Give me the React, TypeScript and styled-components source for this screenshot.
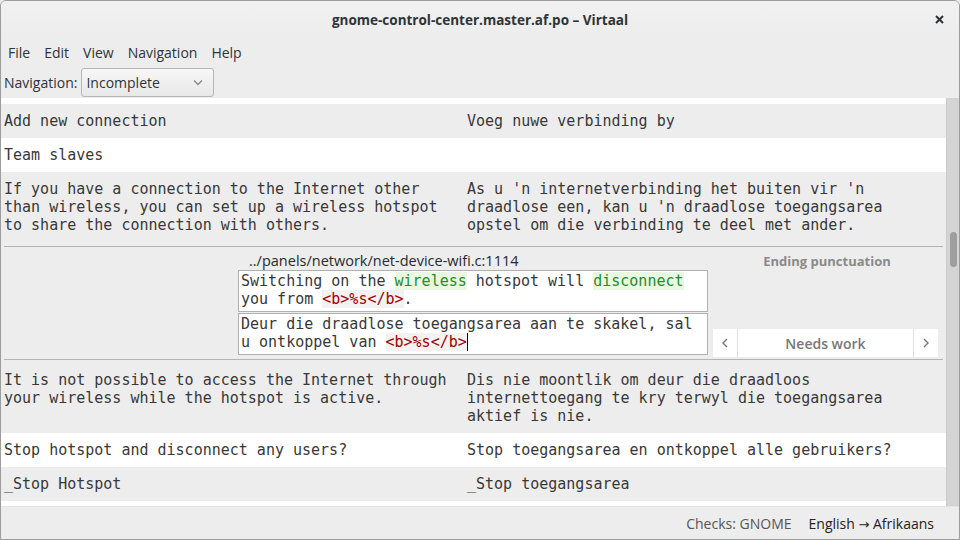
import React from "react";
import styled, { createGlobalStyle } from "styled-components";

const GlobalStyle = createGlobalStyle`
  html, body { margin: 0; padding: 0; width: 960px; height: 540px; overflow: hidden; background: #ededed; }
  * { box-sizing: border-box; }
`;

const UI = `"Open Sans", "Noto Sans", sans-serif`;
const MONO = `"DejaVu Sans Mono", "Liberation Mono", monospace`;

const Window = styled.div`
  width: 960px;
  height: 540px;
  display: flex;
  flex-direction: column;
  background: #ededed;
  border: 1px solid #9c9c9c;
  border-radius: 6px 6px 0 0;
  overflow: hidden;
  font-family: ${UI};
  color: #2e3436;
`;

const TitleBar = styled.div`
  height: 37px;
  flex: none;
  display: grid;
  grid-template-columns: 1fr auto 1fr;
  align-items: center;
  background: linear-gradient(#f1f1f1, #ededed);
`;

const Title = styled.div`
  grid-column: 2;
  font-size: 13.5px;
  font-weight: 700;
  color: #2e3436;
`;

const CloseButton = styled.div`
  grid-column: 3;
  justify-self: end;
  margin-right: 15px;
  display: flex;
  align-items: center;
`;

const MenuBar = styled.div`
  height: 28px;
  flex: none;
  display: flex;
  align-items: center;
  padding-left: 7px;
  font-size: 14px;
`;

const MenuItem = styled.span`
  margin-right: 14px;
`;

const ToolBar = styled.div`
  height: 32px;
  flex: none;
  display: flex;
  align-items: flex-start;
  padding: 2px 0 0 3px;
  gap: 4px;
  font-size: 14px;
`;

const ToolLabel = styled.span`
  line-height: 29px;
`;

const Combo = styled.div`
  width: 133px;
  height: 29px;
  border: 1px solid #b6b6b6;
  border-radius: 3px;
  background: linear-gradient(#f7f7f7, #e8e8e8);
  display: flex;
  align-items: center;
  justify-content: space-between;
  padding: 0 10px 0 4px;
  font-size: 14px;
`;

const ListArea = styled.div`
  height: 408px;
  flex: none;
  display: flex;
`;

const List = styled.div`
  flex: 1;
  background: #ededed;
  overflow: hidden;
  display: flex;
  flex-direction: column;
`;

const Row = styled.div<{ $alt: boolean; $pt?: number; $pb?: number }>`
  display: grid;
  grid-template-columns: 463px 1fr;
  background: ${(p) => (p.$alt ? "#ededed" : "#ffffff")};
  padding-top: ${(p) => p.$pt ?? 8}px;
  padding-bottom: ${(p) => p.$pb ?? 8}px;
  flex: none;
`;

const PartialRow = styled.div<{ $h: number }>`
  height: ${(p) => p.$h}px;
  background: #ffffff;
  flex: none;
`;

const Cell = styled.div`
  padding: 0 3px;
  font-family: ${MONO};
  font-size: 15px;
  line-height: 18px;
  white-space: pre;
  color: #383838;
`;

const EditBlock = styled.div`
  margin: 0 3px;
  border-top: 1px solid #b4b4b4;
  border-bottom: 1px solid #b4b4b4;
  padding: 6px 2px 2px 0;
  display: grid;
  grid-template-columns: 234px 470px 5px 228px;
  flex: none;
`;

const Main = styled.div`
  grid-column: 2;
  display: flex;
  flex-direction: column;
  gap: 1px;
  padding-bottom: 2px;
`;

const PathLabel = styled.div`
  height: 16px;
  line-height: 16px;
  padding-left: 11px;
  font-size: 14.5px;
  font-weight: 500;
  color: #2a2a2a;
`;

const TextBox = styled.div`
  height: 42px;
  background: #ffffff;
  border: 1px solid #b0b0b0;
  padding: 1px 3px 3px 2px;
  font-family: ${MONO};
  font-size: 15px;
  line-height: 18px;
  white-space: pre;
  color: #383838;
`;

const Hl = styled.span`
  color: #2a8a2a;
  background: #e8f8e2;
`;

const Tag = styled.span`
  color: #a40000;
  background: #f2f2f2;
`;

const Caret = styled.span`
  display: inline-block;
  width: 0;
  height: 18px;
  vertical-align: top;
  border-left: 1px solid #000;
`;

const Side = styled.div`
  grid-column: 4;
  display: flex;
  flex-direction: column;
`;

const SideTitle = styled.div`
  height: 16px;
  line-height: 16px;
  text-align: center;
  font-size: 13px;
  font-weight: 700;
  color: #8a8a8a;
`;

const StatusNav = styled.div`
  margin-top: auto;
  height: 28px;
  width: 225px;
  background: #ffffff;
  display: grid;
  grid-template-columns: 25px 1fr 25px;
`;

const NavCell = styled.div<{ $sep?: "left" | "right" }>`
  display: flex;
  align-items: center;
  justify-content: center;
  font-size: 14px;
  font-weight: 600;
  color: #777;
  ${(p) => (p.$sep === "left" ? "border-right: 1px solid #e0e0e0;" : "")}
  ${(p) => (p.$sep === "right" ? "border-left: 1px solid #e0e0e0;" : "")}
`;

const Scrollbar = styled.div`
  width: 13px;
  flex: none;
  background: #d4d4d4;
  border-left: 1px solid #cbcbcb;
  display: flex;
  justify-content: center;
`;

const Thumb = styled.div<{ $top: number; $h: number }>`
  width: 7px;
  margin-top: ${(p) => p.$top}px;
  height: ${(p) => p.$h}px;
  border-radius: 4px;
  background: #9e9e9e;
`;

const StatusBar = styled.div`
  flex: 1;
  display: flex;
  align-items: center;
  justify-content: flex-end;
  gap: 17px;
  padding-right: 25px;
  font-size: 14px;
  border-top: 1px solid #e4e4e4;
`;

const Checks = styled.span`
  color: #555;
`;

const Lang = styled.span`
  color: #222;
`;

const Arrow = styled.span`
  font-family: "DejaVu Sans", sans-serif;
  font-size: 13px;
`;

const Chevron = ({ dir, color = "#777" }: { dir: "down" | "left" | "right"; color?: string }) => {
  const d =
    dir === "down" ? "M1 1.5 L5 5.5 L9 1.5" : dir === "left" ? "M5 1 L1 5 L5 9" : "M1 1 L5 5 L1 9";
  const w = dir === "down" ? 10 : 6;
  const h = dir === "down" ? 7 : 10;
  return (
    <svg width={w} height={h} viewBox={`0 0 ${w} ${h}`}>
      <path d={d} fill="none" stroke={color} strokeWidth="1.4" />
    </svg>
  );
};

export default function App() {
  return (
    <>
      <GlobalStyle />
      <Window>
        <TitleBar>
          <Title>gnome-control-center.master.af.po – Virtaal</Title>
          <CloseButton>
            <svg width="9" height="9" viewBox="0 0 9 9">
              <path d="M1 1 L8 8 M8 1 L1 8" stroke="#2e3436" strokeWidth="2" />
            </svg>
          </CloseButton>
        </TitleBar>
        <MenuBar>
          <MenuItem>File</MenuItem>
          <MenuItem>Edit</MenuItem>
          <MenuItem>View</MenuItem>
          <MenuItem>Navigation</MenuItem>
          <MenuItem>Help</MenuItem>
        </MenuBar>
        <ToolBar>
          <ToolLabel>Navigation:</ToolLabel>
          <Combo>
            <span>Incomplete</span>
            <Chevron dir="down" color="#8a8a8a" />
          </Combo>
        </ToolBar>
        <ListArea>
          <List>
            <PartialRow $h={6} />
            <Row $alt>
              <Cell>Add new connection</Cell>
              <Cell>Voeg nuwe verbinding by</Cell>
            </Row>
            <Row $alt={false}>
              <Cell>Team slaves</Cell>
              <Cell></Cell>
            </Row>
            <Row $alt $pb={12}>
              <Cell>{"If you have a connection to the Internet other\nthan wireless, you can set up a wireless hotspot\nto share the connection with others."}</Cell>
              <Cell>{"As u 'n internetverbinding het buiten vir 'n\ndraadlose een, kan u 'n draadlose toegangsarea\nopstel om die verbinding te deel met ander."}</Cell>
            </Row>
            <EditBlock>
              <Main>
                <PathLabel>../panels/network/net-device-wifi.c:1114</PathLabel>
                <TextBox>
                  Switching on the <Hl>wireless</Hl> hotspot will <Hl>disconnect</Hl>
                  {"\n"}you from <Tag>&lt;b&gt;%s&lt;/b&gt;</Tag>.
                </TextBox>
                <TextBox>
                  {"Deur die draadlose toegangsarea aan te skakel, sal\nu ontkoppel van "}
                  <Tag>&lt;b&gt;%s&lt;/b&gt;</Tag>
                  <Caret />
                </TextBox>
              </Main>
              <Side>
                <SideTitle>Ending punctuation</SideTitle>
                <StatusNav>
                  <NavCell $sep="left">
                    <Chevron dir="left" />
                  </NavCell>
                  <NavCell>Needs work</NavCell>
                  <NavCell $sep="right">
                    <Chevron dir="right" />
                  </NavCell>
                </StatusNav>
              </Side>
            </EditBlock>
            <Row $alt $pt={11}>
              <Cell>{"It is not possible to access the Internet through\nyour wireless while the hotspot is active."}</Cell>
              <Cell>{"Dis nie moontlik om deur die draadloos\ninternettoegang te kry terwyl die toegangsarea\naktief is nie."}</Cell>
            </Row>
            <Row $alt={false}>
              <Cell>Stop hotspot and disconnect any users?</Cell>
              <Cell>Stop toegangsarea en ontkoppel alle gebruikers?</Cell>
            </Row>
            <Row $alt>
              <Cell>_Stop Hotspot</Cell>
              <Cell>_Stop toegangsarea</Cell>
            </Row>
            <PartialRow $h={10} />
          </List>
          <Scrollbar>
            <Thumb $top={134} $h={35} />
          </Scrollbar>
        </ListArea>
        <StatusBar>
          <Checks>Checks: GNOME</Checks>
          <Lang>
            English <Arrow>→</Arrow> Afrikaans
          </Lang>
        </StatusBar>
      </Window>
    </>
  );
}
